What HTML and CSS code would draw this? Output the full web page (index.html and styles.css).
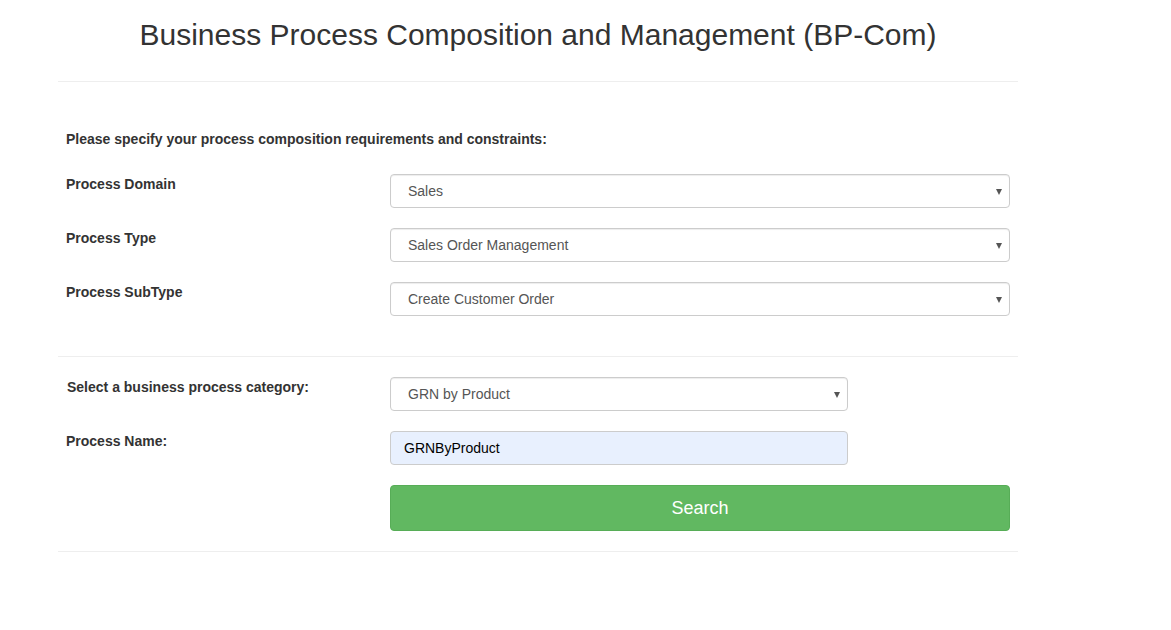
FILE: index.html
```html
<!DOCTYPE html>
<html lang="en">
<head>
<meta charset="utf-8">
<title>BP-Com</title>
<link rel="stylesheet" href="styles.css">
</head>
<body>
<div class="page">
  <h1 class="title">Business Process Composition and Management (BP-Com)</h1>
  <hr class="rule rule-top">
  <form class="form">
    <p class="intro">Please specify your process composition requirements and constraints:</p>
    <div class="row">
      <label class="label">Process Domain</label>
      <div class="field wide"><div class="select">Sales</div></div>
    </div>
    <div class="row">
      <label class="label">Process Type</label>
      <div class="field wide"><div class="select">Sales Order Management</div></div>
    </div>
    <div class="row">
      <label class="label">Process SubType</label>
      <div class="field wide"><div class="select">Create Customer Order</div></div>
    </div>
    <hr class="rule rule-mid">
    <div class="row">
      <label class="label label-inset">Select a business process category:</label>
      <div class="field narrow"><div class="select">GRN by Product</div></div>
    </div>
    <div class="row">
      <label class="label">Process Name:</label>
      <div class="field narrow"><div class="input">GRNByProduct</div></div>
    </div>
    <div class="row">
      <span class="label"></span>
      <div class="field wide"><button type="button" class="btn">Search</button></div>
    </div>
    <hr class="rule rule-bottom">
  </form>
</div>
</body>
</html>
```
FILE: styles.css
```css
* { box-sizing: border-box; }
html, body { margin: 0; padding: 0; background: #fff; }
body {
  font-family: "Liberation Sans", Arial, Helvetica, sans-serif;
  color: #333;
  font-size: 14px;
  line-height: 20px;
}
.page {
  width: 960px;
  margin-left: 58px;
}
.title {
  margin: 18px 0 0;
  font-size: 30px;
  line-height: 33px;
  font-weight: 400;
  text-align: center;
  color: #333;
}
.rule {
  border: 0;
  border-top: 1px solid #eee;
  margin: 0;
  height: 0;
}
.rule-top { margin-top: 30px; }
.form { padding: 0; }
.intro {
  margin: 47px 8px 25px;
  font-weight: 700;
  font-size: 14px;
  line-height: 20px;
}
.row {
  display: flex;
  padding: 0 8px;
  margin-bottom: 20px;
}
.label {
  width: 324px;
  flex: none;
  font-weight: 700;
  line-height: 20px;
}
.label-inset { padding-left: 1px; }
.field { flex: none; }
.field.wide { width: 620px; }
.field.narrow { width: 458px; }
.select {
  position: relative;
  height: 34px;
  border: 1px solid #ccc;
  border-radius: 4px;
  padding: 0 17px;
  line-height: 32px;
  color: #555;
  background: #fff;
  box-shadow: inset 0 1px 1px rgba(0,0,0,.075);
}
.select::after {
  content: "";
  position: absolute;
  right: 7px;
  top: 14px;
  border-left: 3.5px solid transparent;
  border-right: 3.5px solid transparent;
  border-top: 6px solid #555;
}
.input {
  height: 34px;
  border: 1px solid #ccc;
  border-radius: 4px;
  padding: 0 13px;
  line-height: 32px;
  color: #000;
  background: #e8f0fe;
}
.btn {
  display: block;
  width: 100%;
  height: 46px;
  border: 1px solid #57ad57;
  border-radius: 4px;
  background: #61b861;
  color: #fff;
  font-family: inherit;
  font-size: 18px;
  line-height: 24px;
  padding: 0;
  cursor: pointer;
}
.rule-mid { margin: 40px 0 20px; }
.rule-bottom { margin-top: 0; }
```
